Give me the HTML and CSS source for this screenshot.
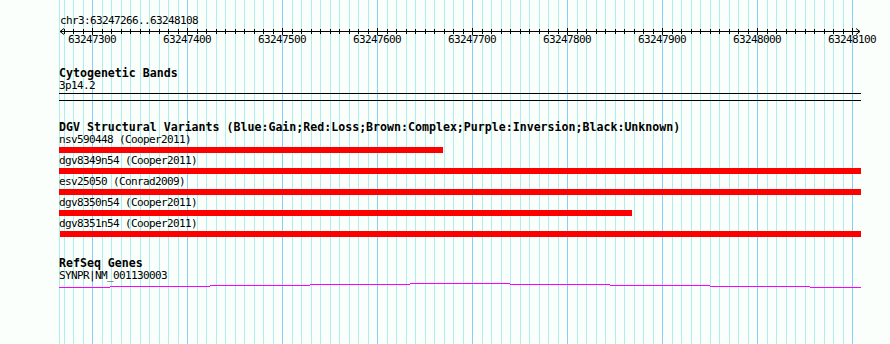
FILE: index.html
```html
<!DOCTYPE html>
<html lang="en">
<head>
  <meta charset="UTF-8">
  <title>chr3:63247266..63248108</title>
  <link rel="stylesheet" href="styles.css">
</head>
<body>
<div class="tracks">
  <!-- Ruler -->
  <div class="range">chr3:63247266..63248108</div>
  <svg class="axis" width="802" height="9" viewBox="0 0 802 9">
    <path d="M1 4.5H801" stroke="#000" shape-rendering="crispEdges" />
    <polyline points="5,1.5 1,4.5 5,7.5" fill="none" stroke="#000" />
    <polyline points="797,1.5 801,4.5 797,7.5" fill="none" stroke="#000" />
  </svg>
  <div class="ticks">
    <span>63247300</span>
    <span>63247400</span>
    <span>63247500</span>
    <span>63247600</span>
    <span>63247700</span>
    <span>63247800</span>
    <span>63247900</span>
    <span>63248000</span>
    <span>63248100</span>
  </div>

  <!-- Cytogenetic Bands -->
  <div class="track">
    <div class="track-title">Cytogenetic Bands</div>
    <div class="label">3p14.2</div>
    <div class="band"></div>
  </div>

  <!-- DGV -->
  <div class="track">
    <div class="track-title">DGV Structural Variants (Blue:Gain;Red:Loss;Brown:Complex;Purple:Inversion;Black:Unknown)</div>
    <div class="label">nsv590448 (Cooper2011)</div>
    <div class="bar loss" style="width: 384px"></div>
    <div class="label">dgv8349n54 (Cooper2011)</div>
    <div class="bar loss"></div>
    <div class="label">esv25050 (Conrad2009)</div>
    <div class="bar loss"></div>
    <div class="label">dgv8350n54 (Cooper2011)</div>
    <div class="bar loss" style="width: 573px"></div>
    <div class="label">dgv8351n54 (Cooper2011)</div>
    <div class="bar loss" style="margin-left: 1px; width: 801px"></div>
  </div>

  <!-- RefSeq -->
  <div class="track">
    <div class="track-title">RefSeq Genes</div>
    <div class="label">SYNPR|NM_001130003</div>
    <svg class="gene" width="802" height="6" viewBox="0 0 802 6">
      <rect x="0" y="5" width="51" height="1" />
      <rect x="51" y="4" width="100" height="1" />
      <rect x="151" y="3" width="100" height="1" />
      <rect x="251" y="2" width="100" height="1" />
      <rect x="351" y="1" width="100" height="1" />
      <rect x="451" y="2" width="100" height="1" />
      <rect x="551" y="3" width="100" height="1" />
      <rect x="651" y="4" width="100" height="1" />
      <rect x="751" y="5" width="51" height="1" />
    </svg>
  </div>
</div>
</body>
</html>
```

FILE: styles.css
```css
/* Body */
body {
  margin: 0;
  background-color: #fbfffb;
  font-family: "DejaVu Sans Mono", "Liberation Mono", monospace;
  font-size: 11px;
  letter-spacing: -0.62px;
  color: #000;
}

/* Track area with the 10bp grid (95px per 100bp) */
.tracks {
  box-sizing: border-box;
  margin-left: 59px;
  width: 802px;
  height: 344px;
  padding-top: 14px;
  background:
    linear-gradient(#afeeee, #afeeee) 0 0 / 1px 100% no-repeat,
    linear-gradient(to right,
      #87cefa 0 1px, transparent 1px 10px,
      #afeeee 10px 11px, transparent 11px 19px,
      #afeeee 19px 20px, transparent 20px 29px,
      #afeeee 29px 30px, transparent 30px 38px,
      #afeeee 38px 39px, transparent 39px 48px,
      #afeeee 48px 49px, transparent 49px 57px,
      #afeeee 57px 58px, transparent 58px 67px,
      #afeeee 67px 68px, transparent 68px 76px,
      #afeeee 76px 77px, transparent 77px 86px,
      #afeeee 86px 87px, transparent 87px) 33px 0 / 95px 100% repeat-x;
}

/* Ruler */
.range {
  line-height: 13px;
  padding-left: 1px;
}

.axis {
  display: block;
  background:
    linear-gradient(to right, #000 0 1px, transparent 1px) 33px 1px / 95px 7px repeat-x,
    linear-gradient(to right,
      #000 0 1px, transparent 1px 10px,
      #000 10px 11px, transparent 11px 19px,
      #000 19px 20px, transparent 20px 29px,
      #000 29px 30px, transparent 30px 38px,
      #000 38px 39px, transparent 39px 48px,
      #000 48px 49px, transparent 49px 57px,
      #000 57px 58px, transparent 58px 67px,
      #000 67px 68px, transparent 68px 76px,
      #000 76px 77px, transparent 77px 86px,
      #000 86px 87px, transparent 87px) 33px 2px / 95px 5px repeat-x;
}

.ticks {
  display: flex;
  margin-top: -3px;
  margin-left: -14.5px;
  line-height: 13px;
}

.ticks span {
  flex: none;
  width: 95px;
  text-align: center;
}

/* Tracks */
.track {
  margin-top: 21px;
}

.ticks + .track {
  margin-top: 22px;
}

.track-title {
  font-weight: bold;
  font-size: 11.6px;
  letter-spacing: 0;
  line-height: 11px;
  white-space: nowrap;
}

.label {
  line-height: 13px;
  white-space: nowrap;
}

.band {
  margin-top: 1px;
  height: 6px;
  border-top: 1px solid #000;
  border-bottom: 1px solid #000;
}

.bar {
  width: 802px;
  height: 6px;
  margin: 1px 0;
}

.bar.loss {
  background-color: #ff0000;
}

.gene {
  display: block;
  fill: #ff00ff;
  shape-rendering: crispEdges;
}
```
